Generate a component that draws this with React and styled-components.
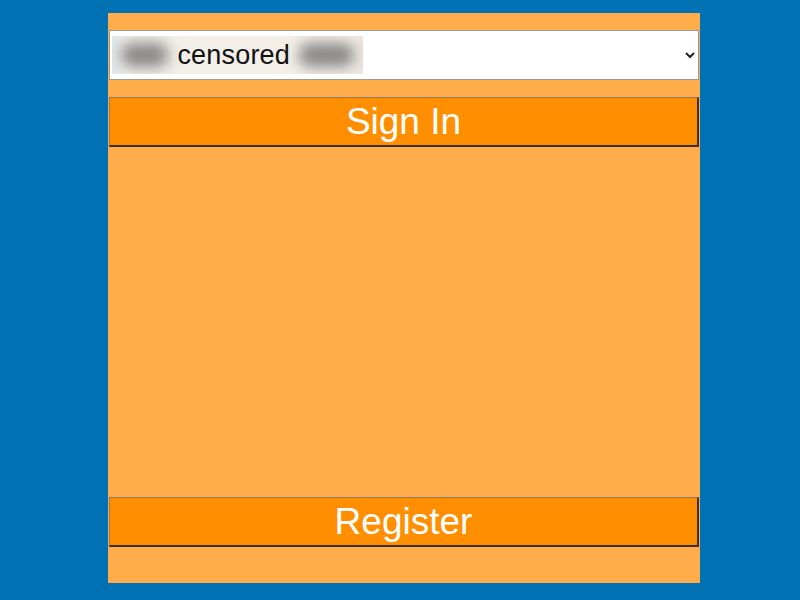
import React from 'react'
import styled, { createGlobalStyle } from 'styled-components'

const GlobalStyle = createGlobalStyle`
  html, body {
    margin: 0;
    padding: 0;
    background-color: #0072b3;
    font-family: "Liberation Sans", Arial, sans-serif;
  }
`

const App = () => {
  return (
    <Page>
      <GlobalStyle />
      <Panel>
        {/* account picker, the name is hidden by a censor box */}
        <SelectWrap>
          <AccountSelect defaultValue="me">
            <option value="me">censored</option>
          </AccountSelect>
          <CensorBox>
            <Smudge width={50} />
            <Censored>censored</Censored>
            <Smudge width={58} />
          </CensorBox>
        </SelectWrap>
        <ActionButton>Sign In</ActionButton>
        <Spacer />
        <ActionButton>Register</ActionButton>
      </Panel>
    </Page>
  )
}

const Page = styled.div`
  width: 800px;
  height: 600px;
  padding: 13px 0 0 108px;
  box-sizing: border-box;
`

const Panel = styled.div`
  width: 592px;
  height: 570px;
  box-sizing: border-box;
  padding: 17px 1px 36px 1px;
  background-color: #ffad4a;
  display: flex;
  flex-direction: column;
  gap: 17px;
`

const SelectWrap = styled.div`
  position: relative;
  height: 50px;
`

const AccountSelect = styled.select`
  width: 100%;
  height: 50px;
  box-sizing: border-box;
  border: 1px solid #9a9a9a;
  border-radius: 0;
  background-color: #fff;
  font-family: "Liberation Sans", Arial, sans-serif;
  font-size: 16px;
  color: #222;
  padding: 0 4px;
`

const CensorBox = styled.div`
  position: absolute;
  left: 3px;
  top: 6px;
  width: 251px;
  height: 38px;
  background: linear-gradient(90deg, #dfe8ec 0%, #f2eee9 6%, #f4eee6 94%, #ece6df 100%);
  display: flex;
  align-items: center;
  overflow: hidden;
  pointer-events: none;
`

const Smudge = styled.div`
  width: ${({ width }) => width}px;
  height: 24px;
  margin: 0 9px;
  border-radius: 10px;
  background-color: #8a8a8a;
  filter: blur(7px);
`

const Censored = styled.span`
  font-size: 27px;
  color: #111;
  letter-spacing: 0.2px;
`

const ActionButton = styled.button`
  height: 50px;
  box-sizing: border-box;
  background-color: #ff8f00;
  border-style: solid;
  border-width: 1px 2px 2px 1px;
  border-color: #8c7a66 #3a2e20 #3a2e20 #8c7a66;
  border-radius: 0;
  color: #fff;
  font-family: "Liberation Sans", Arial, sans-serif;
  font-size: 37px;
  padding: 0;
  cursor: pointer;
`

const Spacer = styled.div`
  flex: 1;
`

export default App
